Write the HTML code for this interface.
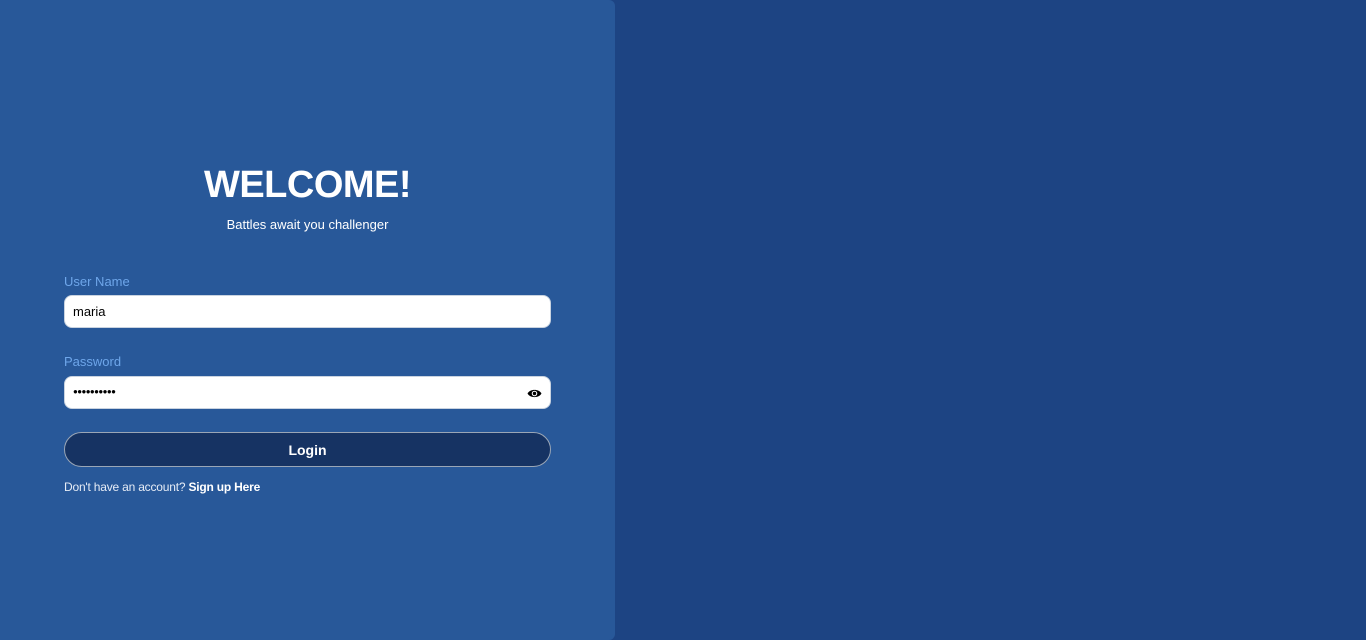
<!DOCTYPE html>
<html><head><style>
*{margin:0;padding:0;box-sizing:border-box}
body{width:1366px;height:640px;background:#1d4483;font-family:"Liberation Sans",sans-serif;overflow:hidden;position:relative}
.panel{position:absolute;left:0;top:0;width:615px;height:640px;background:#285899;border-radius:0 6px 6px 0}
h1{position:absolute;left:0;width:615px;top:162px;text-align:center;color:#fff;font-size:38px;font-weight:bold;line-height:46px;letter-spacing:-0.5px}
.sub{position:absolute;left:0;width:615px;top:217px;text-align:center;color:#fff;font-size:13px}
.lbl{position:absolute;left:64px;color:#6ea6ea;font-size:13px}
.inp{position:absolute;left:64px;width:487px;height:33px;background:#fff;border:1px solid #c9d3e0;border-radius:8px;font-size:13px;color:#000;padding:8px 0 0 8px}
.btn{position:absolute;left:64px;top:432px;width:487px;height:35px;background:#163363;border:1px solid #9aa6b6;border-radius:18px;color:#fff;font-size:14px;font-weight:bold;text-align:center;line-height:34px}
.foot{position:absolute;left:64px;top:480px;color:#e6ecf6;font-size:12px;letter-spacing:-0.2px}
.foot b{color:#fff}
</style></head><body>
<div class="panel">
<h1>WELCOME!</h1>
<div class="sub">Battles await you challenger</div>
<div class="lbl" style="top:274px">User Name</div>
<div class="inp" style="top:295px">maria</div>
<div class="lbl" style="top:354px">Password</div>
<div class="inp" style="top:376px;font-size:8px;padding-top:10px;letter-spacing:-0.6px">●●●●●●●●●●
<svg style="position:absolute;right:8px;top:11px" width="15" height="11" viewBox="0 0 14 10"><path d="M0.5 5C3 0.5 11 0.5 13.5 5C11 9.5 3 9.5 0.5 5Z" fill="#000"/><circle cx="7" cy="5" r="2.6" fill="#fff"/><circle cx="7" cy="5" r="1.6" fill="#000"/></svg></div>
<div class="btn">Login</div>
<div class="foot">Don't have an account? <b>Sign up Here</b></div>
</div>
</body></html>
